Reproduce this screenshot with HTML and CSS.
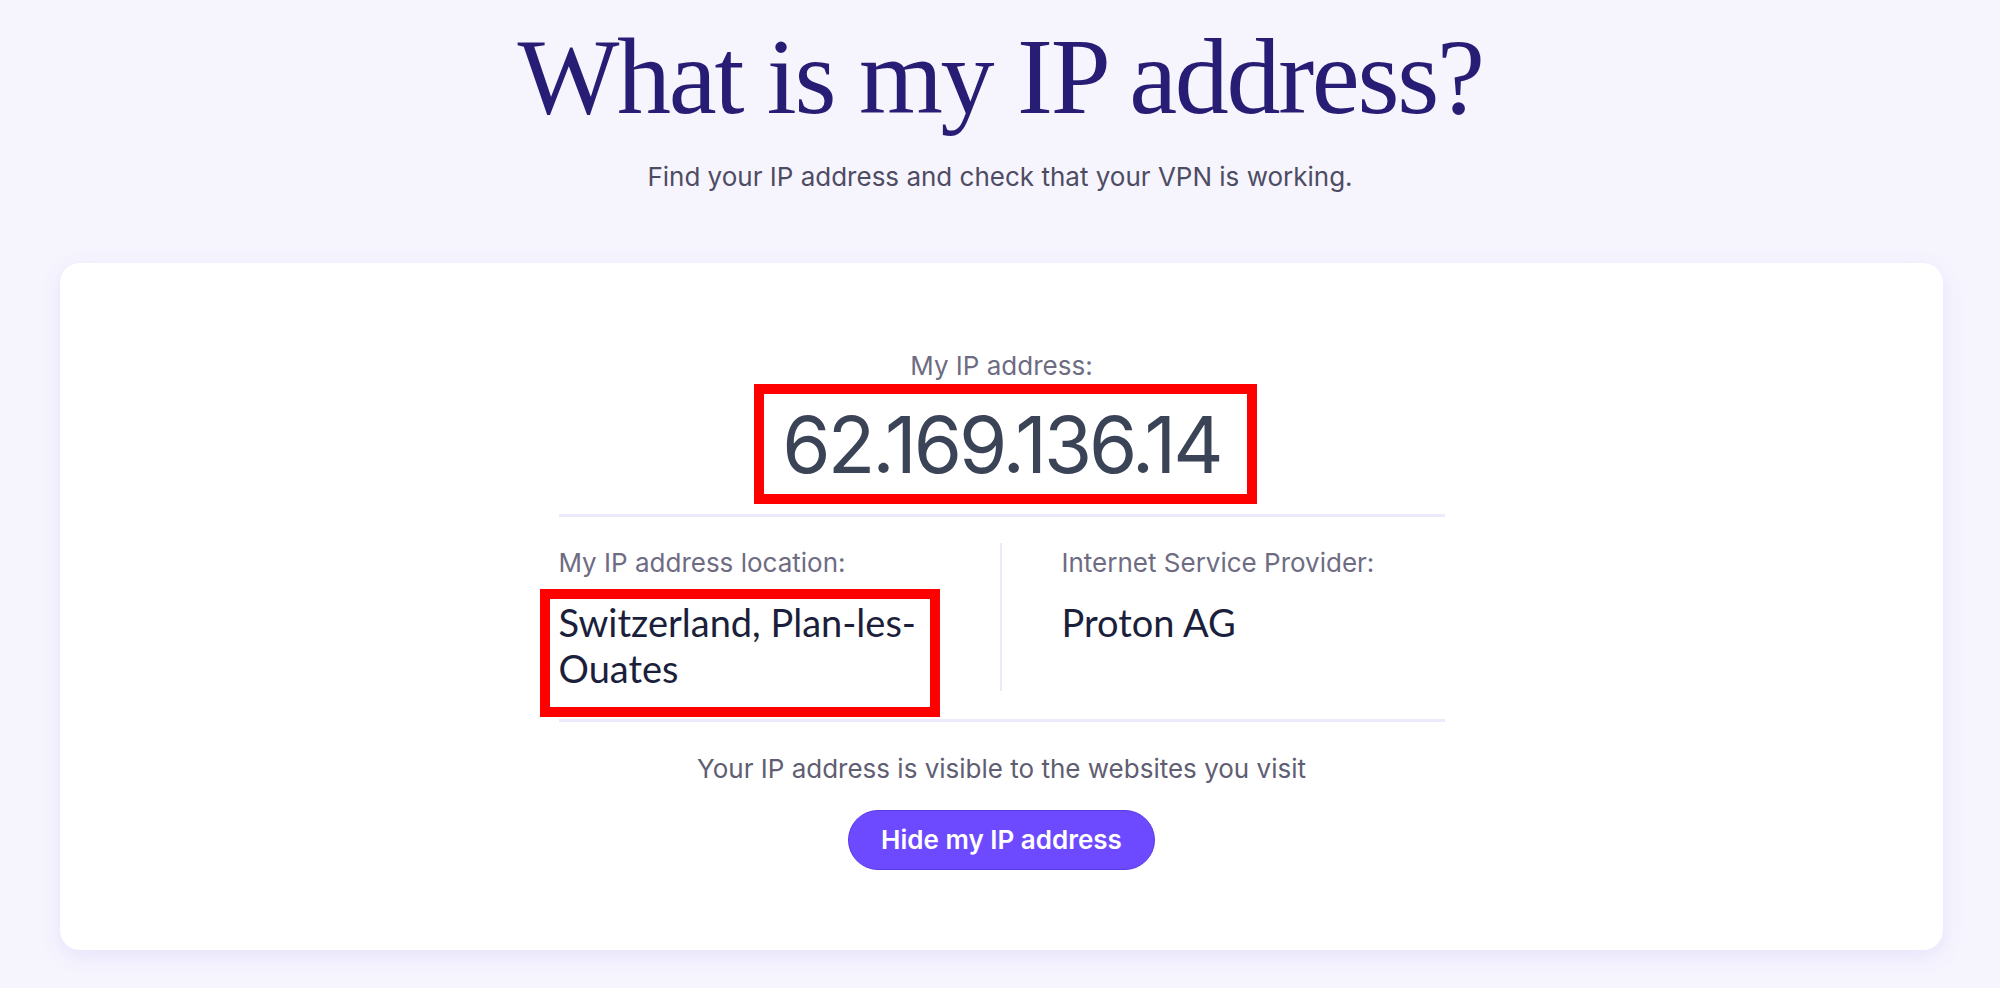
FILE: index.html
```html
<!DOCTYPE html>
<html lang="en">
<head>
    <meta charset="UTF-8">
    <meta name="viewport" content="width=device-width, initial-scale=1.0">
    <title>What is my IP address?</title>
    <link rel="stylesheet" href="styles.css">
</head>
<body>
    <!-- Page header -->
    <header class="intro">
        <h1 class="intro-title">What is my IP address?</h1>
        <p class="intro-text">Find your IP address and check that your VPN is working.</p>
    </header>

    <!-- IP lookup result -->
    <main class="ip-card">
        <p class="ip-label">My IP address:</p>
        <div class="ip-value"><span class="mark mark-ip">62.169.136.14</span></div>

        <div class="ip-details">
            <div class="detail detail-location">
                <p class="detail-label">My IP address location:</p>
                <p class="detail-value"><span class="mark mark-location">Switzerland, Plan-les-Ouates</span></p>
            </div>
            <div class="detail detail-isp">
                <p class="detail-label">Internet Service Provider:</p>
                <p class="detail-value">Proton AG</p>
            </div>
        </div>

        <p class="ip-note">Your IP address is visible to the websites you visit</p>
        <a class="btn-hide" href="#">Hide my IP address</a>
    </main>
</body>
</html>
```

FILE: styles.css
```css
body {
    margin: 0;
    background: #f6f5fe;
    font-family: Inter, "Noto Sans", sans-serif;
    color: #1b1f3b;
}

p {
    margin: 0;
}

.intro {
    text-align: center;
    padding-top: 12px;
}

.intro-title {
    margin: 0;
    font-family: "Liberation Serif", serif;
    font-weight: 400;
    font-size: 108px;
    line-height: 130px;
    letter-spacing: -2.3px;
    color: #281d74;
}

.intro-text {
    margin-top: 18px;
    font-size: 26px;
    line-height: 33px;
    color: #4e4c63;
}

.ip-card {
    margin: 70px 57px 40px 60px;
    background: #fff;
    border-radius: 20px;
    box-shadow: 0 6px 22px rgba(90, 70, 220, 0.10);
    padding: 86px 0 80px;
    display: flex;
    flex-direction: column;
    align-items: center;
    text-align: center;
}

.ip-label {
    font-size: 26px;
    line-height: 33px;
    color: #6e6c82;
}

.ip-value {
    margin-top: 24px;
    font-size: 78px;
    line-height: 78px;
    letter-spacing: -3px;
    color: #3b4456;
}

/* red highlight frames */
.mark {
    position: relative;
    display: inline-block;
}

.mark::after {
    content: "";
    position: absolute;
    border: 10px solid #ff0000;
    pointer-events: none;
}

.mark-ip::after {
    top: -22px;
    bottom: -20px;
    left: -28px;
    right: -36px;
}

.mark-location::after {
    top: -10px;
    bottom: -26px;
    left: -19px;
    right: -20px;
}

.ip-details {
    width: 886px;
    margin-top: 30px;
    border-top: 3px solid #ebe9fb;
    border-bottom: 3px solid #ebe9fb;
    padding: 26px 0 28px;
    display: grid;
    grid-template-columns: 1fr 1fr;
    text-align: left;
}

.detail-location {
    padding-right: 80px;
    border-right: 2px solid #ebe9fb;
}

.detail-isp {
    padding-left: 60px;
}

.detail-label {
    font-size: 26px;
    line-height: 40px;
    color: #6e6c82;
}

.detail-value {
    margin-top: 16px;
    font-family: Lato, "Noto Sans", sans-serif;
    font-size: 38px;
    line-height: 46px;
    color: #1b1f3b;
}

.ip-note {
    margin-top: 30px;
    font-size: 26px;
    line-height: 33px;
    color: #5f5e72;
}

.btn-hide {
    margin-top: 25px;
    display: inline-block;
    padding: 0 32px;
    height: 60px;
    line-height: 58px;
    box-sizing: border-box;
    border: 1px solid #5a39e6;
    border-radius: 30px;
    background: #6d4aff;
    color: #fff;
    font-size: 26px;
    font-weight: 600;
    text-decoration: none;
}
```
